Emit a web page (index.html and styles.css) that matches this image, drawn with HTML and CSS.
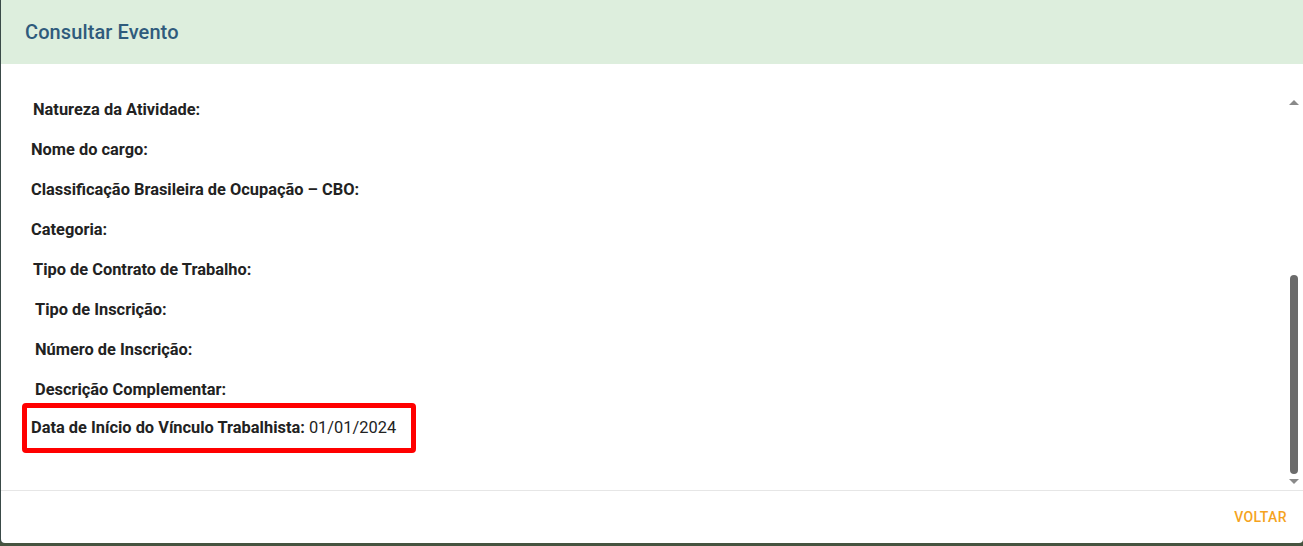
FILE: index.html
```html
<!DOCTYPE html>
<html lang="pt-BR">
<head>
    <meta charset="UTF-8">
    <meta name="viewport" content="width=device-width, initial-scale=1.0">
    <title>Consultar Evento</title>
    <link rel="stylesheet" href="styles.css">
</head>
<body>
    <div class="dialog">
        <div class="dialog-header">
            <h2>Consultar Evento</h2>
        </div>
        <div class="dialog-body">
            <div class="fields">
                <p class="field pad-2">Natureza da Atividade:</p>
                <p class="field">Nome do cargo:</p>
                <p class="field">Classificação Brasileira de Ocupação – CBO:</p>
                <p class="field">Categoria:</p>
                <p class="field pad-2">Tipo de Contrato de Trabalho:</p>
                <p class="field pad-4">Tipo de Inscrição:</p>
                <p class="field pad-4">Número de Inscrição:</p>
                <p class="field pad-4">Descrição Complementar:</p>
                <div class="highlight">
                    <p class="field"><b>Data de Início do Vínculo Trabalhista:</b> 01/01/2024</p>
                </div>
            </div>
            <div class="scrollbar">
                <span class="arrow up"></span>
                <div class="track">
                    <div class="thumb"></div>
                </div>
                <span class="arrow down"></span>
            </div>
        </div>
        <div class="dialog-footer">
            <button type="button" class="btn-text">Voltar</button>
        </div>
    </div>
</body>
</html>
```

FILE: styles.css
```css
body {
    margin: 0;
    padding: 0;
    background-color: #46533f;
    font-family: Roboto, "Liberation Sans", Arial, sans-serif;
    overflow: hidden;
}
.dialog {
    margin-left: 1px;
    height: 543px;
    background: #fff;
    border-radius: 0 0 4px 4px;
    display: flex;
    flex-direction: column;
    box-shadow: -1px 0 0 #3a4a48;
}
.dialog-header {
    height: 64px;
    background-color: #ddeedd;
    display: flex;
    align-items: center;
    padding: 0 24px;
    box-sizing: border-box;
}
.dialog-header h2 {
    margin: 0;
    font-size: 20px;
    font-weight: 500;
    color: #2f5b7c;
    letter-spacing: 0.1px;
}
.dialog-body {
    flex: 1;
    display: flex;
    border-bottom: 1px solid #e6e6e6;
}
.fields {
    flex: 1;
    padding: 31px 0 0 30px;
}
.field {
    margin: 0;
    height: 40px;
    line-height: 30px;
    font-size: 16.4px;
    font-weight: bold;
    color: #222;
}
.pad-2 {
    padding-left: 2px;
}
.pad-4 {
    padding-left: 4px;
}
.highlight {
    display: inline-block;
    margin: -12px 0 0 -9px;
    padding: 5px 15px 5px 4px;
    border: 5px solid #ff0000;
    border-radius: 4px;
}
.highlight .field {
    height: 30px;
    font-weight: normal;
}
.highlight b {
    font-weight: bold;
}
.scrollbar {
    width: 16px;
    margin-right: 1px;
    display: flex;
    flex-direction: column;
    align-items: center;
    padding: 36px 0 6px;
}
.arrow {
    width: 0;
    height: 0;
    border-left: 5px solid transparent;
    border-right: 5px solid transparent;
}
.arrow.up {
    border-bottom: 5px solid #8a8a8a;
}
.arrow.down {
    border-top: 5px solid #8a8a8a;
}
.track {
    flex: 1;
    width: 100%;
    display: flex;
    justify-content: center;
    padding: 170px 0 5px;
}
.thumb {
    width: 8px;
    background-color: #6b6b6b;
    border-radius: 4px;
}
.dialog-footer {
    height: 52px;
    display: flex;
    align-items: center;
    justify-content: flex-end;
    padding: 0 8px;
}
.btn-text {
    background: none;
    border: none;
    font-family: inherit;
    font-size: 14px;
    font-weight: 500;
    color: #f5a31e;
    text-transform: uppercase;
    letter-spacing: 0.4px;
    padding: 8px 8px;
    cursor: pointer;
}
```
